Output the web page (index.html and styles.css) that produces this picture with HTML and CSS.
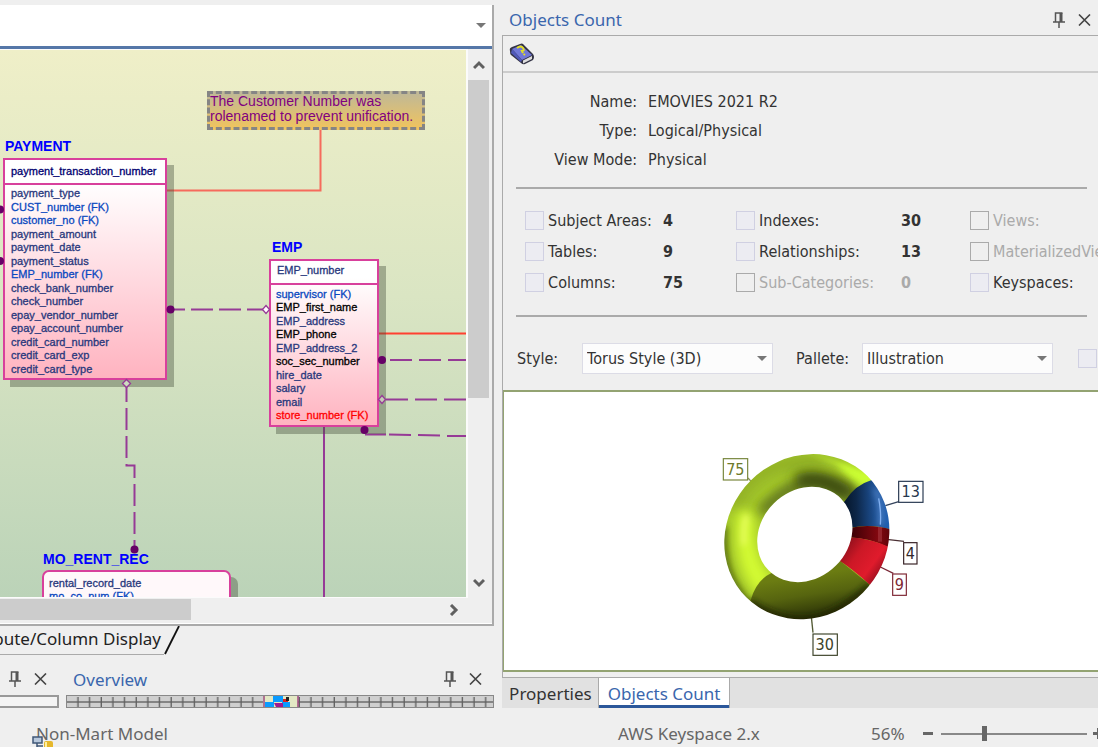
FILE: index.html
```html
<!DOCTYPE html>
<html lang="en">
<head>
<meta charset="utf-8">
<title>EMOVIES 2021 R2</title>
<link rel="stylesheet" href="styles.css">
</head>
<body>
<div class="workspace">
  <section class="left">
    <div class="document">
      <div class="combo-bar"><button class="drop" aria-label="Show list"><svg width="12" height="6" viewBox="0 0 12 6"><path d="M1 0h10L6 5z" fill="#777"/></svg></button></div>
      <div class="view">
        <div class="canvas">
          <svg class="links" width="466" height="547" viewBox="0 50 466 547" fill="none" stroke="#963a96" stroke-width="2">
            <path d="M320.500 129V190.500H167" stroke="#f66b5c"/>
            <path d="M379 333.500H466" stroke="#ff4030"/>
            <path d="M170 309.500H265" stroke-dasharray="22 6" stroke-dashoffset="7"/>
            <path d="M126.500 384V465.500H134.500V550" stroke-dasharray="22 6" stroke-dashoffset="4"/>
            <path d="M390 360H466M386 399.500H466" stroke-dasharray="22 7"/>
            <path d="M365 434.500H386M389 434.500L411 435M418 435L440 435.500M447 436H466"/>
            <path d="M324 426V597"/>
          </svg>
          <div class="note">The Customer Number was rolenamed to prevent unification.</div>
          <h3 class="entity-name payment-name">PAYMENT</h3>
          <div class="entity payment">
            <p class="key strong">payment_transaction_number</p>
            <ul>
              <li>payment_type</li><li class="fk">CUST_number (FK)</li><li class="fk">customer_no (FK)</li><li>payment_amount</li><li>payment_date</li><li>payment_status</li><li class="fk">EMP_number (FK)</li><li>check_bank_number</li><li>check_number</li><li>epay_vendor_number</li><li>epay_account_number</li><li>credit_card_number</li><li>credit_card_exp</li><li>credit_card_type</li>
            </ul>
          </div>
          <h3 class="entity-name emp-name">EMP</h3>
          <div class="entity emp">
            <p class="key">EMP_number</p>
            <ul>
              <li class="fk">supervisor (FK)</li><li class="idx">EMP_first_name</li><li>EMP_address</li><li class="idx">EMP_phone</li><li>EMP_address_2</li><li class="idx">soc_sec_number</li><li>hire_date</li><li>salary</li><li>email</li><li class="red">store_number (FK)</li>
            </ul>
          </div>
          <div class="entity rent">
            <ul><li>rental_record_date</li><li class="fk">mo_co_num (FK)</li></ul>
          </div>
          <svg class="links" width="466" height="547" viewBox="0 50 466 547">
            <g fill="#660066"><circle cx="0" cy="209.500" r="4"/><circle cx="0" cy="261" r="4"/><circle cx="170.500" cy="309.500" r="4"/><circle cx="382" cy="360" r="4"/><circle cx="364.500" cy="430" r="4"/><circle cx="134.500" cy="549.500" r="4"/></g>
            <g fill="#fff" stroke="#963a96" stroke-width="1.300"><path d="M266 305.500l3.500 4-3.500 4-3.500-4z"/><path d="M126.500 379.500l4 4-4 4-4-4z" fill="#cddcbf"/><path d="M382 395.500l3.500 4-3.500 4-3.500-4z" fill="#c5cdb7"/></g>
          </svg>
          <h3 class="entity-name rent-name">MO_RENT_REC</h3>
        </div>
        <div class="vscroll">
          <button aria-label="Scroll up"><svg width="12" height="10" viewBox="0 0 12 10"><path d="M1 8l5-5 5 5" fill="none" stroke="#606060" stroke-width="3"/></svg></button>
          <div class="thumb-v"></div>
          <button aria-label="Scroll down"><svg width="12" height="10" viewBox="0 0 12 10"><path d="M1 2l5 5 5-5" fill="none" stroke="#606060" stroke-width="3"/></svg></button>
        </div>
      </div>
      <div class="hscroll"><div class="thumb-h"></div><button aria-label="Scroll right"><svg width="10" height="12" viewBox="0 0 10 12"><path d="M2 1l5 5-5 5" fill="none" stroke="#606060" stroke-width="3"/></svg></button></div>
    </div>
    <div class="sheet-tabs"><button class="sheet-tab"><span>Attribute/Column Display</span></button><svg width="17" height="29" viewBox="0 0 17 29"><path d="M1 28L15 0" stroke="#111" stroke-width="1.800"/></svg></div>
    <div class="docks">
      <div class="dock dock-small">
        <header class="dock-head">
          <button aria-label="Pin"><svg width="12" height="16" viewBox="0 0 12 16"><path d="M2.500 10V1h7M0 10h12M6 10v6" fill="none" stroke="#555" stroke-width="1.500"/><path d="M6.500 1h3v9h-3z" fill="#555"/></svg></button>
          <button aria-label="Close"><svg width="13" height="12" viewBox="0 0 13 12"><path d="M1 .500l11 11M12 .500l-11 11" stroke="#444" stroke-width="1.600"/></svg></button></header>
        <div class="blank-box"></div>
      </div>
      <div class="dock dock-wide">
        <header class="dock-head"><h2>Overview</h2>
          <button aria-label="Pin"><svg width="12" height="16" viewBox="0 0 12 16"><path d="M2.500 10V1h7M0 10h12M6 10v6" fill="none" stroke="#555" stroke-width="1.500"/><path d="M6.500 1h3v9h-3z" fill="#555"/></svg></button>
          <button aria-label="Close"><svg width="13" height="12" viewBox="0 0 13 12"><path d="M1 .500l11 11M12 .500l-11 11" stroke="#444" stroke-width="1.600"/></svg></button></header>
        <svg class="overview" width="100%" height="13">
          <defs><pattern id="grid" width="11.650" height="13" patternUnits="userSpaceOnUse"><path d="M0 6h12" stroke="#858585" stroke-width="2"/><path d="M11 1v11" stroke="#606060" stroke-width="1.400"/></pattern></defs>
          <rect width="100%" height="13" fill="#cfcfcf"/><rect width="100%" height="13" fill="url(#grid)"/>
          <rect x="196" y="0" width="35" height="11" fill="#e3e8c4"/><path d="M197 0v11M231 0v11" stroke="#a04a80" stroke-width="1.500"/><path d="M206 0h10v6h-10zM198 6h9v5h-9zM215 6h8v5h-8z" fill="#0a9bff"/><path d="M207 7h9v4h-7z" fill="#a01890"/><path d="M216 3h5v3h-5z" fill="#d22"/><path d="M219 1h3v4h-3z" fill="#222"/>
        </svg>
      </div>
    </div>
  </section>

  <section class="right">
    <header class="dock-head main-head"><h2>Objects Count</h2>
      <button aria-label="Pin"><svg width="12" height="16" viewBox="0 0 12 16"><path d="M2.500 10V1h7M0 10h12M6 10v6" fill="none" stroke="#555" stroke-width="1.500"/><path d="M6.500 1h3v9h-3z" fill="#555"/></svg></button>
      <button aria-label="Close"><svg width="13" height="12" viewBox="0 0 13 12"><path d="M1 .500l11 11M12 .500l-11 11" stroke="#444" stroke-width="1.600"/></svg></button></header>
    <div class="panel">
      <div class="toolbar"><button aria-label="Help"><svg width="26" height="22" viewBox="0 0 26 22"><path d="M1 8Q0 5 3 4L11 1Q13 0 14 1L24 11Q26 14 24 17L16 21Q14 22 12 20L2 12Q1 11 1 8z" fill="#333345"/><path d="M3 6L12 2 23 12 13 17z" fill="#7078d8"/><path d="M3 6l10 11-1 2L2 10z" fill="#5058b8"/><path d="M14 17.500l9-4.500v3l-9 4.500z" fill="#ddd"/><path d="M8 5q4-3 6 0t-1 3l1 2M14.500 11l1.500 1" fill="none" stroke="#e6e020" stroke-width="2"/></svg></button></div>
      <dl class="info"><dt>Name:</dt><dd>EMOVIES 2021 R2</dd><dt>Type:</dt><dd>Logical/Physical</dd><dt>View Mode:</dt><dd>Physical</dd></dl>
      <div class="stats">
        <div class="stat-col first">
          <div class="stat"><input type="checkbox" id="c1"><label for="c1">Subject Areas:</label><b>4</b></div>
          <div class="stat"><input type="checkbox" id="c2"><label for="c2">Tables:</label><b>9</b></div>
          <div class="stat"><input type="checkbox" id="c3"><label for="c3">Columns:</label><b>75</b></div>
        </div>
        <div class="stat-col second">
          <div class="stat"><input type="checkbox" id="c4"><label for="c4">Indexes:</label><b>30</b></div>
          <div class="stat"><input type="checkbox" id="c5"><label for="c5">Relationships:</label><b>13</b></div>
          <div class="stat"><input type="checkbox" id="c6" disabled><label for="c6">Sub-Categories:</label><b>0</b></div>
        </div>
        <div class="stat-col">
          <div class="stat"><input type="checkbox" id="c7" disabled><label for="c7">Views:</label></div>
          <div class="stat"><input type="checkbox" id="c8" disabled><label for="c8">MaterializedViews:</label></div>
          <div class="stat"><input type="checkbox" id="c9"><label for="c9">Keyspaces:</label></div>
        </div>
      </div>
      <div class="options">
        <label class="style-label" for="style">Style:</label>
        <span class="pick"><select id="style"><option>Torus Style (3D)</option></select></span>
        <label class="pal-label" for="pal">Pallete:</label>
        <span class="pick"><select id="pal"><option>Illustration</option></select></span>
        <input type="checkbox" aria-label="Show legend">
      </div>
      <div class="chart">
        <svg width="240" height="240" viewBox="0 0 720 720">
          <defs>
            <mask id="ring" maskUnits="userSpaceOnUse" x="0" y="0" width="720" height="720"><ellipse cx="320.500" cy="320" rx="257" ry="238" fill="#fff" transform="rotate(-45 320.500 320)"/><ellipse cx="314.500" cy="313.500" rx="153" ry="132" fill="#000" transform="rotate(-45 314.500 313.500)"/></mask>
            <filter id="b8" filterUnits="userSpaceOnUse" x="0" y="0" width="720" height="720"><feGaussianBlur stdDeviation="9"/></filter>
            <filter id="b14" filterUnits="userSpaceOnUse" x="0" y="0" width="720" height="720"><feGaussianBlur stdDeviation="17"/></filter>
            <linearGradient id="blue" x1="437" x2="568" y1="230" y2="225" gradientUnits="userSpaceOnUse"><stop offset="0" stop-color="#06182e"/><stop offset=".250" stop-color="#0d2749"/><stop offset=".600" stop-color="#1b4a88"/><stop offset="1" stop-color="#1f60b4"/></linearGradient>
            <linearGradient id="dred" x1="458" x2="568" y1="0" y2="0" gradientUnits="userSpaceOnUse"><stop offset="0" stop-color="#400006"/><stop offset=".700" stop-color="#840810"/><stop offset="1" stop-color="#60040a"/></linearGradient>
            <linearGradient id="red" x1="430" x2="540" y1="350" y2="430" gradientUnits="userSpaceOnUse"><stop offset="0" stop-color="#90101c"/><stop offset=".350" stop-color="#cc1826"/><stop offset=".750" stop-color="#e01b2c"/><stop offset="1" stop-color="#a01020"/></linearGradient>
            <linearGradient id="olive" x1="300" x2="320" y1="440" y2="566" gradientUnits="userSpaceOnUse"><stop offset="0" stop-color="#6b7c12"/><stop offset=".450" stop-color="#56640f"/><stop offset="1" stop-color="#293006"/></linearGradient>
          </defs>
          <g stroke-width="4" fill="none"><path d="M144 144l12 13" stroke="#89925a"/><path d="M556 227l40-12" stroke="#34435c"/><path d="M560 328l52 6" stroke="#4b3034"/><path d="M535 408l45 22" stroke="#7a2836"/><path d="M334 560l5 48" stroke="#535a34"/></g>
          <g mask="url(#ring)">
            <rect x="40" y="40" width="560" height="560" fill="#a4c82a"/>
            <path d="M100 240Q140 110 300 95T400 90" fill="none" stroke="#93b228" stroke-width="50" filter="url(#b14)"/>
            <path d="M310 60L550 140 480 180 410 105z" fill="#ccff32" filter="url(#b8)"/>
            <path d="M112 240Q88 400 175 500L220 445Q155 380 165 250z" fill="#d3fb32" filter="url(#b14)"/>
            <path d="M140 255Q128 295 132 345" fill="none" stroke="#f4ff78" stroke-width="10" filter="url(#b8)"/>
            <path d="M185 250Q290 130 400 165T450 220" fill="none" stroke="#56691a" stroke-width="34" filter="url(#b14)"/>
            <path d="M290 155Q370 130 445 200" fill="none" stroke="#3a480d" stroke-width="44" filter="url(#b14)"/>
            <path d="M72 290C68 400 90 460 155 530" fill="none" stroke="#4a5a10" stroke-width="16" filter="url(#b8)"/>
            <path d="M140 600L152 510Q170 450 213 430L315 400 420 392 507 462 520 600z" fill="url(#olive)"/>
            <path d="M150 515Q225 570 310 570T510 465" fill="none" stroke="#1e2404" stroke-width="16" filter="url(#b8)"/>
            <path d="M420 230L437 210Q465 165 517 149L590 140 590 300 567 297Q510 280 450 294z" fill="url(#blue)"/>
            <path d="M525 175Q548 225 541 288" fill="none" stroke="#75a5e8" stroke-width="8" filter="url(#b8)"/><path d="M536 205Q544 245 541 284" fill="none" stroke="#82b0f0" stroke-width="4"/>
            <path d="M450 294Q510 280 575 299L570 353 560 350Q510 325 445 322z" fill="url(#dred)"/><path d="M534 290h12v45h-12z" fill="#b85058" opacity=".4"/>
            <path d="M450 322Q510 325 580 356L540 490 507 462Q460 418 410 386z" fill="url(#red)"/>
          </g>
          <g fill="#fff" stroke-width="3.500"><rect x="70" y="86" width="73" height="64" stroke="#76853a"/><rect x="596" y="154" width="73" height="63" stroke="#26374f"/><rect x="611" y="338" width="40" height="64" stroke="#351f23"/><rect x="578" y="432" width="41" height="64" stroke="#7e2633"/><rect x="339" y="612" width="73" height="64" stroke="#3c4329"/></g>
          <g class="labels"><text x="106" y="134" fill="#6d7a2c">75</text><text x="632" y="201" fill="#26374f">13</text><text x="631" y="386" fill="#33282c">4</text><text x="598" y="480" fill="#7e2633">9</text><text x="374" y="660" fill="#3c4329">30</text></g>
        </svg>
      </div>
    </div>
    <nav class="tabs"><button class="tab">Properties</button><button class="tab active">Objects Count</button></nav>
  </section>
</div>
<footer class="status">
  <span class="model"><svg class="model-icon" width="22" height="13" viewBox="0 0 22 13"><path d="M1 1h9v6H1zM5 7v6M5 10h6" fill="#b8c8dc" stroke="#405878" stroke-width="1.500"/><rect x="12" y="5" width="9" height="9" rx="2" fill="#e6b82c"/><path d="M14 6v7" stroke="#fff0a0" stroke-width="2"/></svg>Non-Mart Model</span>
  <span class="target">AWS Keyspace 2.x</span>
  <label class="zoom" for="zoom">56%</label>
  <button class="minus" aria-label="Zoom out"></button>
  <input type="range" id="zoom" min="0" max="100" value="29">
  <button class="plus" aria-label="Zoom in"></button>
</footer>
</body>
</html>
```

FILE: styles.css
```css
* { box-sizing: border-box; margin: 0; padding: 0; }
body { height: 100vh; display: flex; flex-direction: column; background: #efefef; overflow: hidden; font-family: "Noto Sans", sans-serif; font-size: 17px; color: #333; }
button { border: 0; background: none; font: inherit; color: inherit; display: flex; align-items: center; justify-content: center; }
svg { display: block; }
ul { list-style: none; }
.workspace { flex: 1; min-height: 0; display: flex; gap: 8px; }
.left { flex: 0 0 45%; min-width: 0; display: flex; flex-direction: column; padding-top: 5px; }
.document { flex: 1; min-height: 0; display: flex; flex-direction: column; border: solid #aaa; border-width: 0 2px 2px 0; }
.combo-bar { height: 41px; background: #fff; display: flex; justify-content: flex-end; align-items: center; padding: 0 5px; }
.view { flex: 1; min-height: 0; display: flex; border-top: 3px solid #5577a8; }
.canvas { position: relative; flex: 1; overflow: hidden; border: solid #fbfbfb; border-width: 1px 2px 1px 0; background: linear-gradient(#efefc8, #dae5c3 45%, #bbd3b8); }
.vscroll { width: 24px; padding-right: 3px; display: flex; flex-direction: column; }
.vscroll button { height: 31px; }
.thumb-v { height: 318px; background: #ccc; margin-bottom: auto; }
.hscroll { height: 26px; display: flex; justify-content: space-between; padding: 1px 33px 3px 0; border-bottom: 1px solid #fff; }
.thumb-h { width: 191px; background: #ccc; }
.links { position: absolute; left: 0; top: 0; }
.note { position: absolute; left: 207px; top: 41px; width: 218px; height: 39px; border: 3px dashed #858585; background: linear-gradient(#bdb89a, #f2c45c) border-box; color: #800080; font: 14px/15px "Liberation Sans", sans-serif; }
.entity-name { position: absolute; font: bold 14px/16px "Liberation Sans", sans-serif; color: #00f; }
.payment-name { left: 5px; top: 88px; }
.emp-name { left: 272px; top: 189px; }
.rent-name { left: 43px; top: 501px; }
.entity { position: absolute; display: flex; flex-direction: column; border: 2px solid #d8409c; background: linear-gradient(#fff 10%, #ffb3c0); box-shadow: 7px 7px 0 rgba(70, 80, 60, .4); font: 11px/13px "Liberation Sans", sans-serif; color: #28387c; white-space: nowrap; -webkit-text-stroke: .3px; }
.entity ul { flex: 1; display: flex; flex-direction: column; justify-content: space-between; }
.key { border-bottom: 2px solid #d8409c; }
.strong { color: #000070; }
.fk { color: #0a48c0; }
.idx { color: #000; }
.red { color: #f00; }
.payment { left: 3px; top: 108px; width: 164px; height: 222px; }
.payment .key { padding: 5px 6px; }
.payment ul { padding: 2px 6px; }
.emp { left: 269px; top: 209px; width: 110px; height: 168px; }
.emp .key { padding: 3px 6px 6px; }
.emp ul { padding: 3px 5px; }
.rent { left: 42px; top: 520px; width: 189px; height: 60px; border-radius: 7px; background: #fff8fa; }
.rent ul { padding: 5px; justify-content: flex-start; }
.sheet-tabs { display: flex; height: 29px; margin-bottom: 10px; }
.sheet-tab { width: 164px; justify-content: flex-end; padding: 0 3px 3px 0; border-bottom: 1px solid #aaa; white-space: nowrap; color: #222; }
.docks { display: flex; gap: 7px; }
.dock-small { flex: 0 0 59px; }
.dock-wide { flex: 1; }
.dock-head { height: 30px; display: flex; align-items: center; justify-content: flex-end; gap: 13px; padding: 0 12px 2px 7px; }
.dock-head h2 { flex: 1; font-weight: 400; font-size: 17px; color: #3a66ad; }
.blank-box { height: 13px; border: solid #999; border-width: 2px 2px 2px 0; background: #f4f4f4; }
.overview { border: 1px solid #888; }
.right { flex: 1; min-width: 0; display: flex; flex-direction: column; }
.main-head { height: 35px; padding: 4px 7px 0 7px; }
.panel { flex: 1; min-height: 0; display: flex; flex-direction: column; border: solid #aaa; border-width: 1px 0 1px 1px; font-family: "DejaVu Sans Condensed", "DejaVu Sans", sans-serif; font-size: 16px; overflow: hidden; }
.toolbar { height: 37px; display: flex; align-items: center; padding: 0 6px; border-bottom: 2px solid #ccc; }
.info { display: grid; grid-template-columns: 134px 1fr; column-gap: 11px; line-height: 29px; padding: 14px 0 13px; }
.info dt { text-align: right; }
.stats { display: flex; margin: 0 11px 0 13px; height: 130px; border: solid #aaa; border-width: 2px 0; padding: 16px 0 0 9px; white-space: nowrap; }
.stat-col { flex: 1; min-width: 0; }
.first { flex: 0 0 211px; }
.second { flex: 0 0 234px; }
.stat { display: flex; align-items: center; height: 31px; gap: 4px; }
.first label { flex: 0 0 111px; }
.second label { flex: 0 0 138px; }
input[type=checkbox] { appearance: none; flex: none; width: 19px; height: 19px; border: 1px solid #d0d0e2; background: #ececf2; }
input[type=checkbox]:disabled { border-color: #aaa; background: #efefef; }
:disabled ~ label, :disabled ~ b { color: #aaa; }
.options { display: flex; align-items: center; height: 73px; padding: 9px 0 0 14px; }
.pick { position: relative; flex: none; }
.pick::after { content: ""; position: absolute; right: 6px; top: 13px; border: 5px solid transparent; border-top-color: #777; border-bottom: 0; pointer-events: none; }
select { appearance: none; display: block; width: 191px; height: 31px; border: 1px solid #dcdce6; padding: 0 4px; color: inherit; font: inherit; background: #fcfcfc; }
.style-label { flex: 0 0 65px; }
.pal-label { flex: 0 0 89px; padding-left: 23px; }
.options input { margin-left: 25px; }
.chart { flex: 1; min-height: 0; border: solid #93a372; border-width: 2px 0 2px 1px; background: #fff; padding: 38px 0 0 196px; margin-bottom: 5px; }
.labels { font-family: "DejaVu Sans Condensed", "DejaVu Sans", sans-serif; font-size: 48px; text-anchor: middle; }
.tabs { display: flex; height: 30px; background: #e1e1e1; }
.tab { padding: 0 6px 0 7px; }
.active { padding: 0 9px; background: #fff; color: #3a66ad; border: solid #aaa; border-width: 0 1px; box-shadow: inset 0 -3px #2b579a; }
.status { height: 39px; flex: none; display: flex; align-items: center; padding-top: 12px; color: #666; }
.model { position: relative; flex: 0 0 618px; padding-left: 36px; }
.model-icon { position: absolute; left: 32px; top: 14px; }
.target { flex: 0 0 253px; }
.zoom { flex: 0 0 52px; }
.minus { flex: none; width: 10px; height: 3px; background: #666; }
input[type=range] { appearance: none; flex: 0 0 146px; margin: 0 6px 0 8px; height: 16px; background: linear-gradient(#888, #888) center / 100% 2px no-repeat; }
input[type=range]::-webkit-slider-thumb { appearance: none; width: 5px; height: 15px; background: #666; }
.plus { width: 11px; height: 11px; flex: none; background: linear-gradient(#666, #666) center / 11px 3px no-repeat, linear-gradient(#666, #666) center / 3px 11px no-repeat; }
```
